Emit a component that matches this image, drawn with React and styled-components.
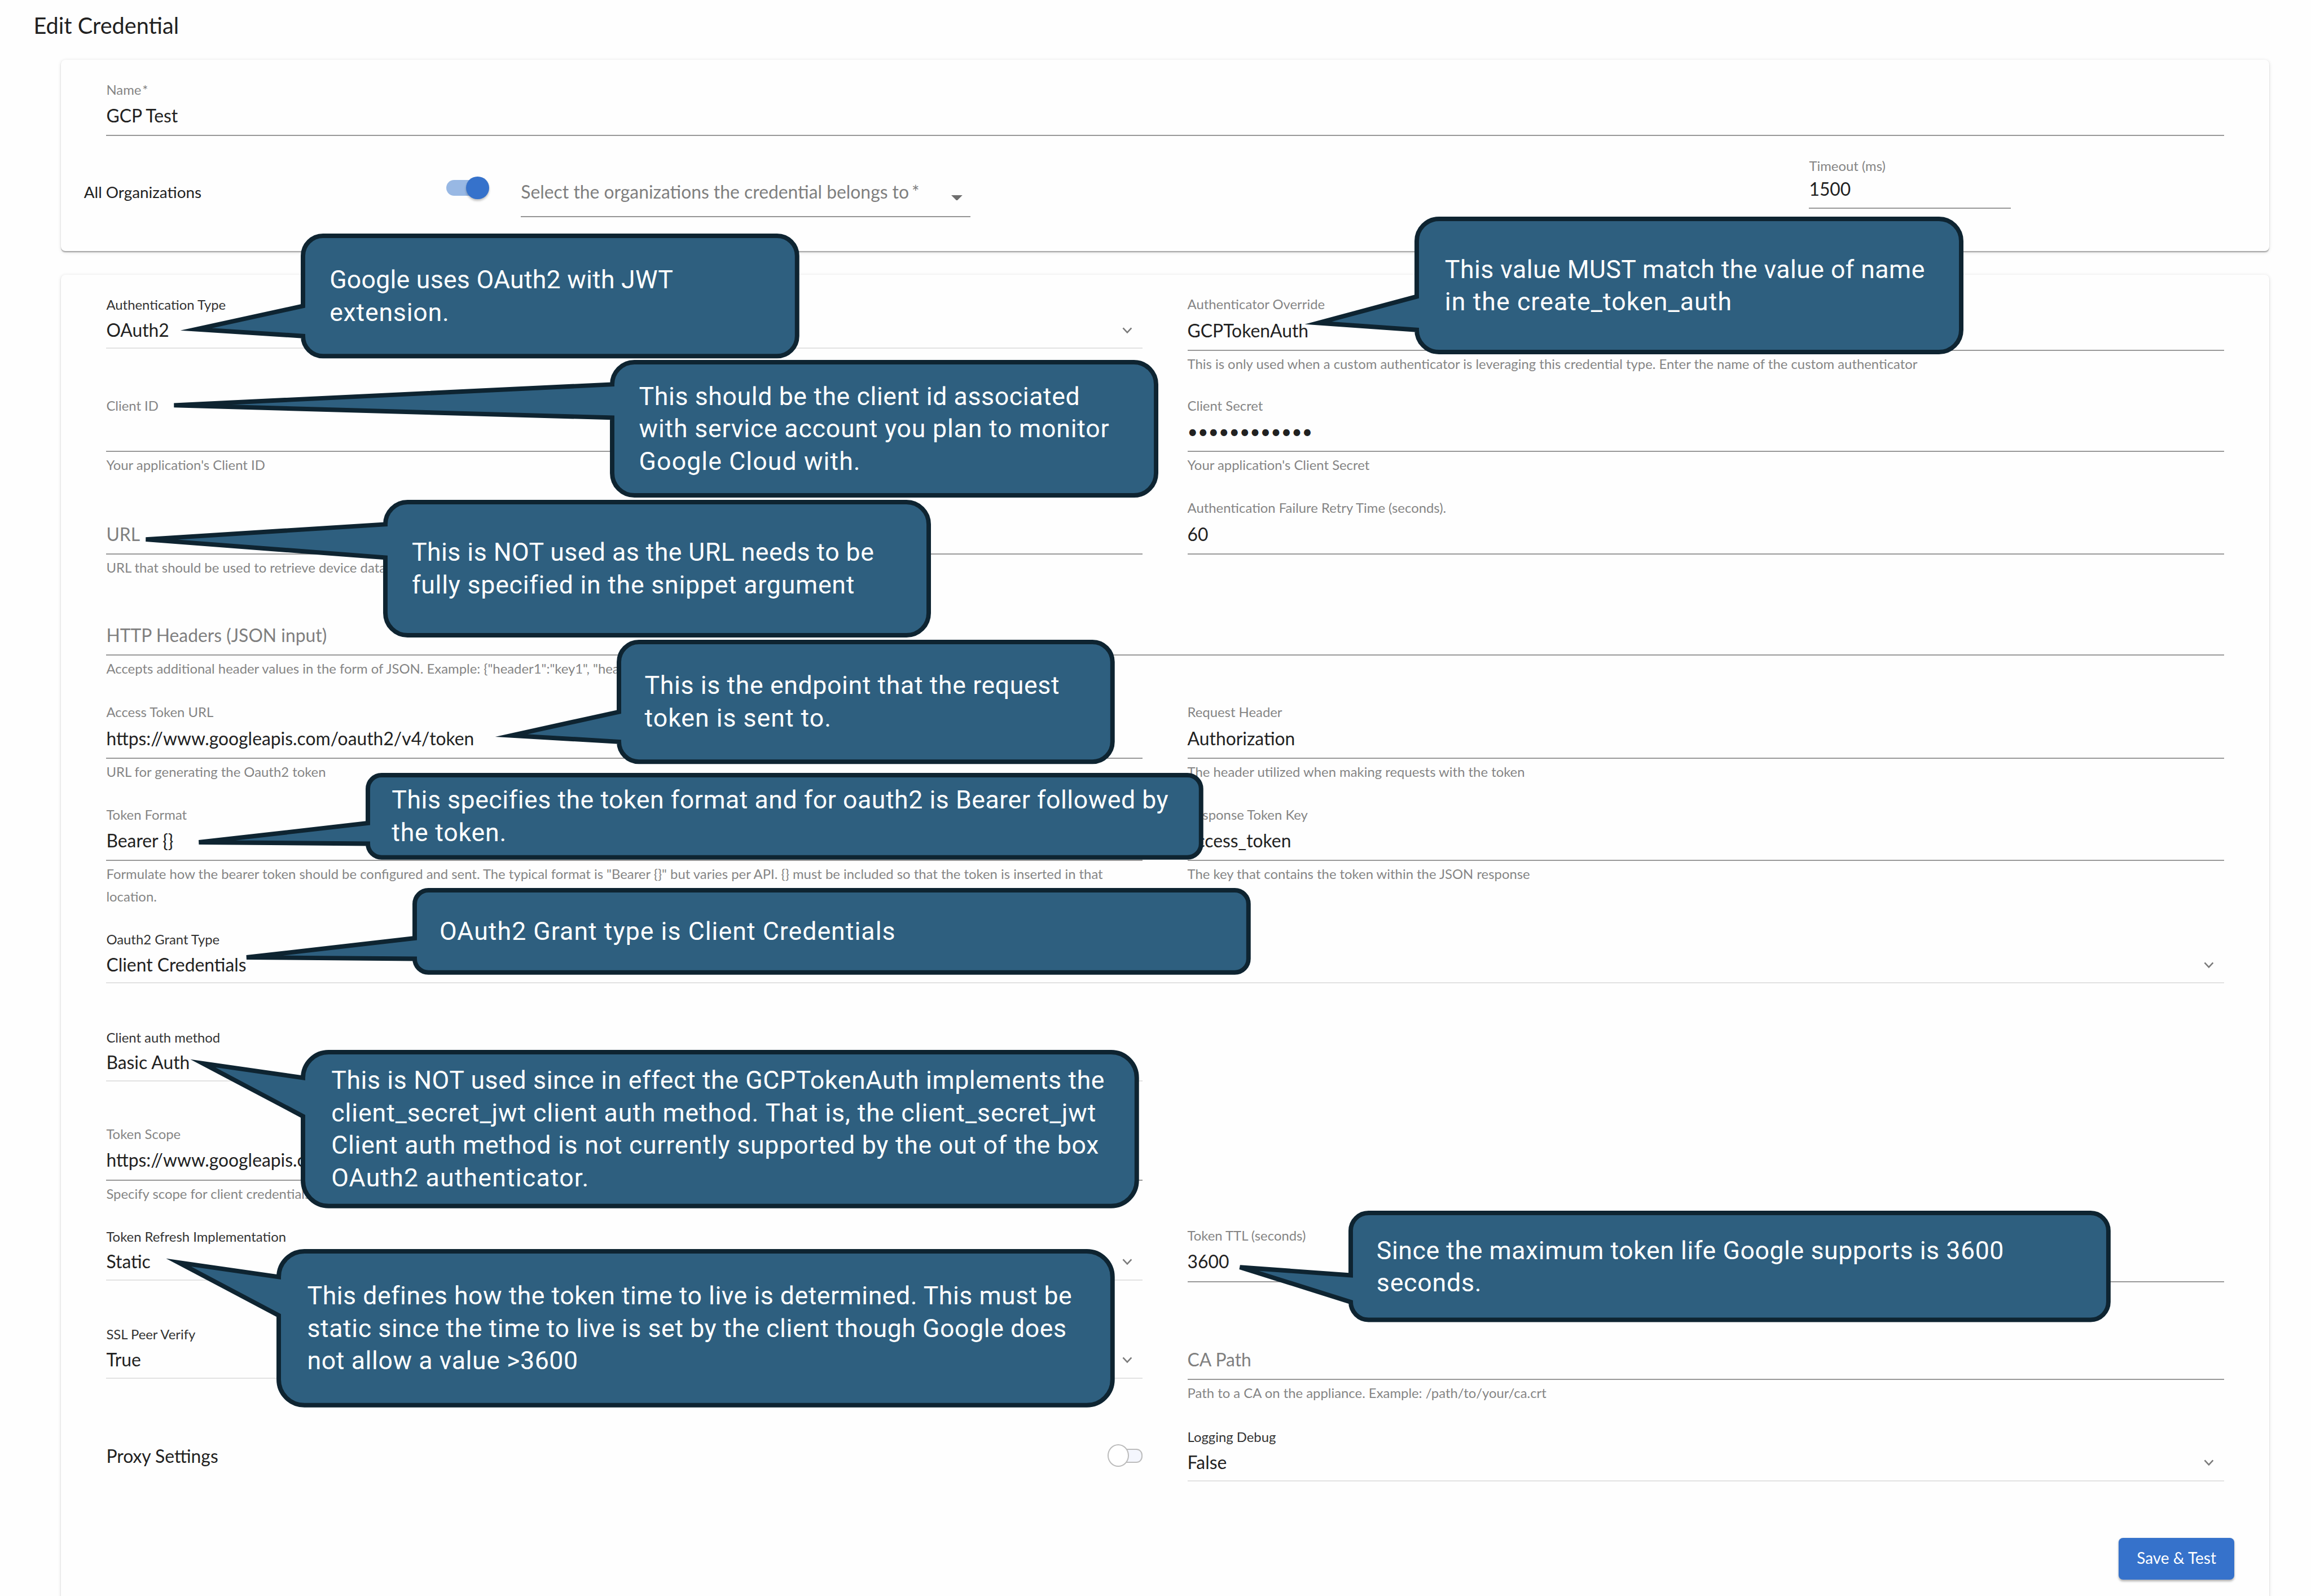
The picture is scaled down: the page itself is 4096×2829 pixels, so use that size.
import React from 'react'
import styled, { createGlobalStyle } from 'styled-components'

const GlobalStyle = createGlobalStyle`
    * {
        box-sizing: border-box;
    }

    body {
        margin: 0;
        overflow: hidden;
        background: #fefefe;
    }
`;

const Page = styled.div`
    position: relative;
    display: flex;
    flex-direction: column;
    width: 4130px;
    height: 2853px;
    overflow: hidden;
    zoom: 0.9918;
    background: #fefefe;
    color: #212121;
    font-family: Lato, Carlito, sans-serif;
`;

const Title = styled.h1`
    height: 48px;
    margin: 21.5px 0 37.5px 60px;
    font-size: 40px;
    font-weight: 400;
    line-height: 48px;
`;

// card
const Card = styled.section`
    margin: 0 75px 0 109px;
    border-radius: 8px;
    background: #fefefe;
    box-shadow: 0 4px 2px -2px rgba(0, 0, 0, 0.2),
        0 2px 2px 0 rgba(0, 0, 0, 0.14),
        0 2px 6px 0 rgba(0, 0, 0, 0.12);
`;

const GeneralCard = styled(Card)`
    height: 342px;
    padding-top: 35.5px;
    margin-bottom: 42px;
`;

const AuthCard = styled(Card)`
    flex: 1 0 auto;
    padding-top: 35px;
    margin-bottom: -20px;
`;

const NameRow = styled.div`
    padding: 0 80px 0 81px;
`;

const OrgRow = styled.div`
    display: flex;
    align-items: flex-start;
    padding-left: 41px;
`;

const OrgLabel = styled.div`
    width: 648px;
    margin-top: 83.5px;
    font-size: 28.1px;
    line-height: 34px;
`;

const OrgSelect = styled.div`
    display: flex;
    justify-content: space-between;
    width: 803px;
    height: 64px;
    margin: 80.5px 1499px 0 57px;
    padding-right: 14px;
    border-bottom: 2.1px solid #949494;
    color: #7f7f7f;
    font-size: 32.1px;
    line-height: 40px;
`;

const Caret = styled.svg`
    width: 20px;
    height: 10px;
    margin-top: 24.5px;
`;

const Required = styled.span`
    margin-left: ${({ $gap }) => $gap || 2}px;
`;

const Timeout = styled.div`
    width: 361px;
    margin-top: 38.2px;
    border-bottom: 2.1px solid #989898;
`;

// form
const Form = styled.div`
    display: grid;
    grid-template-columns: 1852px 1853px;
    grid-template-rows: 181px 183px 181px 184px 183px 222.5px 175px 173.5px 181.5px 175px 184.5px 199px;
    column-gap: 80px;
    padding-left: 81px;
`;

const Field = styled.div`
    grid-column: ${({ $column }) => $column || 'auto'};
    padding-top: ${({ $select, $drop }) => ($select ? 3.5 : 2.5) + ($drop || 0)}px;
`;

const Label = styled.div`
    height: 30px;
    color: ${({ $dark }) => ($dark ? '#333' : '#858585')};
    font-size: 24.07px;
    line-height: 30px;
`;

const Value = styled.div`
    display: flex;
    justify-content: space-between;
    height: ${({ $select }) => ($select ? 53.1 : 55.6)}px;
    margin-top: ${({ $select }) => ($select ? 10.9 : 12.9)}px;
    padding-right: 19px;
    border-bottom: 2.1px solid ${({ $select }) => ($select ? '#e2e2e2' : '#989898')};
    color: ${({ $empty }) => ($empty ? '#7f7f7f' : '#212121')};
    font-size: 32.1px;
    line-height: 40px;
    white-space: nowrap;
`;

const TimeoutValue = styled.div`
    height: 52px;
    margin-top: 7.4px;
    font-size: 32.1px;
    line-height: 40px;
`;

const Hint = styled.div`
    margin-top: 3.2px;
    color: #858585;
    font-size: 24.07px;
    line-height: 40px;
`;

const ChevronIcon = styled.svg`
    width: 18px;
    height: 12px;
    margin-top: 14px;
    overflow: visible;
`;

const ProxyRow = styled.div`
    display: flex;
    justify-content: space-between;
    padding-top: 33.6px;
    font-size: 32.1px;
    line-height: 40px;
`;

const SwitchOn = styled.div`
    display: flex;
    align-items: center;
    justify-content: flex-end;
    width: 76px;
    height: 28px;
    margin-top: 78.3px;

    &::before {
        content: '';
        width: 60px;
        height: 28px;
        margin-right: -25px;
        border-radius: 14px;
        background: #98b8e4;
    }

    &::after {
        content: '';
        z-index: 1;
        width: 41px;
        height: 41px;
        border-radius: 50%;
        background: #3672cb;
        box-shadow: 0 3px 4px rgba(0, 0, 0, 0.25);
    }
`;

const SwitchOff = styled.div`
    display: flex;
    align-items: center;
    width: 63px;
    height: 36px;

    &::before {
        content: '';
        z-index: 1;
        width: 38px;
        height: 36px;
        border: 2.1px solid #bcbcbc;
        border-radius: 50%;
        background: #fff;
    }

    &::after {
        content: '';
        width: 40px;
        height: 21px;
        margin-left: -15px;
        border: 2.1px solid #bcbcbc;
        border-radius: 11px;
        background: #f4f6fd;
    }
`;

const Footer = styled.div`
    display: flex;
    justify-content: flex-end;
    padding-right: 62.5px;
`;

const SaveButton = styled.button`
    width: 206px;
    height: 74px;
    padding: 0 0 2px;
    border: 0;
    border-radius: 8px;
    background: #3672cb;
    box-shadow: 0 3px 4px rgba(0, 0, 0, 0.3);
    color: #fff;
    font-family: inherit;
    font-size: 28.2px;
    line-height: 34px;
`;

// speech bubbles over the form
const Bubble = styled.div`
    position: absolute;
    left: ${({ $x }) => $x}px;
    top: ${({ $y }) => $y}px;
    display: flex;
    flex-direction: column;
    justify-content: center;
    width: ${({ $w }) => $w}px;
    height: ${({ $h }) => $h}px;
    padding-top: 3px;
    padding-left: ${({ $pad }) => $pad}px;
    color: #fff;
    font-family: Roboto, sans-serif;
    font-size: 45px;
    line-height: 58.2px;
    white-space: nowrap;
`;

const BubbleShape = styled.svg`
    position: absolute;
    left: 0;
    top: 0;
    width: 100%;
    height: 100%;
    overflow: visible;
    fill: #2e5f7f;
    stroke: #0e2431;
    stroke-width: 8px;
    stroke-miterlimit: 8;
`;

const BubbleLine = styled.div`
    position: relative;
    letter-spacing: ${({ $tracking }) => $tracking}px;
`;

const Chevron = () => (
    <ChevronIcon viewBox="0 0 18 12">
        <path d="M1.5 1.5 9 9.5 16.5 1.5" fill="none" stroke="#7a7a7a" strokeWidth="2.6" />
    </ChevronIcon>
)

const Input = ({ label, value, placeholder, hint, column, required }) => (
    <Field $column={column}>
        <Label>{label}{required && <Required>*</Required>}</Label>
        <Value $empty={!value}>{value || placeholder}</Value>
        {hint && <Hint>{hint}</Hint>}
    </Field>
)

const Select = ({ label, value, column, drop }) => (
    <Field $select $column={column} $drop={drop}>
        <Label $dark>{label}</Label>
        <Value $select>
            {value}
            <Chevron/>
        </Value>
    </Field>
)

// tail leaves the left side, either near the top or near the bottom
const Callout = ({ x, y, w, h, tip, tail, pad, lines }) => {
    const r = Math.min(w, h) / 6
    const [from, to] = tail === 'upper' ? [h / 6, h * 5 / 12] : [h * 7 / 12, h * 5 / 6]
    const path = `M${r} 0H${w - r}A${r} ${r} 0 0 1 ${w} ${r}V${h - r}A${r} ${r} 0 0 1 ${w - r} ${h}`
        + `H${r}A${r} ${r} 0 0 1 0 ${h - r}V${to}L${tip[0] - x} ${tip[1] - y}L0 ${from}V${r}A${r} ${r} 0 0 1 ${r} 0Z`
    return (
        <Bubble $x={x} $y={y} $w={w} $h={h} $pad={pad}>
            <BubbleShape><path d={path}/></BubbleShape>
            {lines.map(([text, tracking]) => (
                <BubbleLine key={text} $tracking={tracking}>{text}</BubbleLine>
            ))}
        </Bubble>
    )
}

const callouts = [
    { x: 541, y: 421, w: 883, h: 215, tip: [350.5, 588], pad: 48, lines: [
        ['Google uses OAuth2 with JWT', 0.25],
        ['extension.', 0.8],
    ] },
    { x: 2532, y: 391, w: 973, h: 238, tip: [2356, 577], pad: 50, lines: [
        ['This value MUST match the value of name', 0.45],
        ['in the create_token_auth', 1.1],
    ] },
    { x: 1094, y: 647, w: 972, h: 238, tip: [311, 724], tail: 'upper', pad: 48, lines: [
        ['This should be the client id associated', 0.6],
        ['with service account you plan to monitor', 0.8],
        ['Google Cloud with.', 1.1],
    ] },
    { x: 689, y: 897, w: 971, h: 238, tip: [261, 963.7], tail: 'upper', pad: 47, lines: [
        ['This is NOT used as the URL needs to be', 0.45],
        ['fully specified in the snippet argument', 0.77],
    ] },
    { x: 1106, y: 1147, w: 882, h: 214, tip: [914, 1314], pad: 46, lines: [
        ['This is the endpoint that the request', 0.62],
        ['token is sent to.', 1],
    ] },
    { x: 657, y: 1385, w: 1489, h: 147, tip: [355, 1505], pad: 43, lines: [
        ['This specifies the token format and for oauth2 is Bearer followed by', 0.53],
        ['the token.', 0.8],
    ] },
    { x: 741.5, y: 1591, w: 1490, h: 147, tip: [441, 1711], pad: 44, lines: [
        ['OAuth2 Grant type is Client Credentials', 1.05],
    ] },
    { x: 541, y: 1880, w: 1490, h: 275, tip: [362, 1900], tail: 'upper', pad: 51, lines: [
        ['This is NOT used since in effect the GCPTokenAuth implements the', 0.62],
        ['client_secret_jwt client auth method. That is, the client_secret_jwt', 0.94],
        ['Client auth method is not currently supported by the out of the box', 0.76],
        ['OAuth2 authenticator.', 1.2],
    ] },
    { x: 498, y: 2236, w: 1490, h: 275, tip: [319, 2256], tail: 'upper', pad: 51, lines: [
        ['This defines how the token time to live is determined. This must be', 0.52],
        ['static since the time to live is set by the client though Google does', 0.58],
        ['not allow a value >3600', 0.6],
    ] },
    { x: 2414, y: 2168, w: 1354, h: 191, tip: [2216, 2265], pad: 46, lines: [
        ['Since the maximum token life Google supports is 3600', 0.58],
        ['seconds.', 0.8],
    ] },
]

const App = () => {
    return (
        <>
            <GlobalStyle/>
            <Page>
                <Title>Edit Credential</Title>
                <GeneralCard>
                    <NameRow>
                        <Input label="Name" required value="GCP Test"/>
                    </NameRow>
                    <OrgRow>
                        <OrgLabel>All Organizations</OrgLabel>
                        <SwitchOn/>
                        <OrgSelect>
                            <span>Select the organizations the credential belongs to<Required $gap={5}>*</Required></span>
                            <Caret viewBox="0 0 20 10"><path d="M0 0H20L10 10Z" fill="#6e6e6e"/></Caret>
                        </OrgSelect>
                        <Timeout>
                            <Label>Timeout (ms)</Label>
                            <TimeoutValue>1500</TimeoutValue>
                        </Timeout>
                    </OrgRow>
                </GeneralCard>
                <AuthCard>
                    <Form>
                        <Select label="Authentication Type" value="OAuth2"/>
                        <Input label="Authenticator Override" value="GCPTokenAuth" hint="This is only used when a custom authenticator is leveraging this credential type. Enter the name of the custom authenticator"/>
                        <Input label="Client ID" hint="Your application's Client ID"/>
                        <Input label="Client Secret" value="••••••••••••" hint="Your application's Client Secret"/>
                        <Input placeholder="URL" hint="URL that should be used to retrieve device data"/>
                        <Input label="Authentication Failure Retry Time (seconds)." value="60"/>
                        <Input column="1 / 3" placeholder="HTTP Headers (JSON input)" hint={'Accepts additional header values in the form of JSON. Example: {"header1":"key1", "header2":"key2"}'}/>
                        <Input label="Access Token URL" value="https://www.googleapis.com/oauth2/v4/token" hint="URL for generating the Oauth2 token"/>
                        <Input label="Request Header" value="Authorization" hint="The header utilized when making requests with the token"/>
                        <Input label="Token Format" value="Bearer {}" hint={'Formulate how the bearer token should be configured and sent. The typical format is "Bearer {}" but varies per API. {} must be included so that the token is inserted in that location.'}/>
                        <Input label="Response Token Key" value="access_token" hint="The key that contains the token within the JSON response"/>
                        <Select column="1 / 3" label="Oauth2 Grant Type" value="Client Credentials"/>
                        <Select column="1" label="Client auth method" value="Basic Auth"/>
                        <Input column="1" label="Token Scope" value="https://www.googleapis.com" hint="Specify scope for client credentials"/>
                        <Select column="1" label="Token Refresh Implementation" value="Static" drop={1}/>
                        <Input label="Token TTL (seconds)" value="3600"/>
                        <Select label="SSL Peer Verify" value="True" drop={1}/>
                        <Input placeholder="CA Path" hint="Path to a CA on the appliance. Example: /path/to/your/ca.crt"/>
                        <ProxyRow>
                            Proxy Settings
                            <SwitchOff/>
                        </ProxyRow>
                        <Select label="Logging Debug" value="False"/>
                    </Form>
                    <Footer>
                        <SaveButton>Save &amp; Test</SaveButton>
                    </Footer>
                </AuthCard>
                {callouts.map(callout => <Callout key={callout.y} {...callout}/>)}
            </Page>
        </>
    )
}

export default App
